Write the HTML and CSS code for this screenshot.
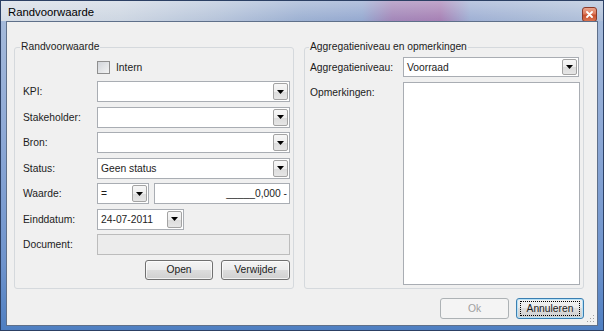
FILE: index.html
```html
<!DOCTYPE html>
<html>
<head>
<meta charset="utf-8">
<link rel="stylesheet" href="styles.css">
</head>
<body>
<div class="window">
  <div class="titlebar">
    <span class="title">Randvoorwaarde</span>
    <div class="close"><svg width="7" height="7" viewBox="0 0 7 7"><path d="M1 1L6 6M6 1L1 6" stroke="#fff" stroke-width="1.8" stroke-linecap="round"/></svg></div>
  </div>
  <div class="client">
    <div class="groups">
      <fieldset class="group group-left">
        <legend>Randvoorwaarde</legend>
        <div class="form form-left">
          <div class="check-row">
            <span class="checkbox"></span><span class="check-label">Intern</span>
          </div>

          <label class="lbl">KPI:</label>
          <div class="combo"><span class="val"></span><span class="drop"><svg width="7" height="4" viewBox="0 0 7 4"><polygon points="0,0 7,0 3.5,4" fill="#000"/></svg></span></div>

          <label class="lbl">Stakeholder:</label>
          <div class="combo"><span class="val"></span><span class="drop"><svg width="7" height="4" viewBox="0 0 7 4"><polygon points="0,0 7,0 3.5,4" fill="#000"/></svg></span></div>

          <label class="lbl">Bron:</label>
          <div class="combo"><span class="val"></span><span class="drop"><svg width="7" height="4" viewBox="0 0 7 4"><polygon points="0,0 7,0 3.5,4" fill="#000"/></svg></span></div>

          <label class="lbl">Status:</label>
          <div class="combo"><span class="val">Geen status</span><span class="drop"><svg width="7" height="4" viewBox="0 0 7 4"><polygon points="0,0 7,0 3.5,4" fill="#000"/></svg></span></div>

          <label class="lbl">Waarde:</label>
          <div class="pair">
            <div class="combo combo-op"><span class="val">=</span><span class="drop"><svg width="7" height="4" viewBox="0 0 7 4"><polygon points="0,0 7,0 3.5,4" fill="#000"/></svg></span></div>
            <div class="textbox num">_____0,000 -</div>
          </div>

          <label class="lbl">Einddatum:</label>
          <div class="combo combo-date"><span class="val">24-07-2011</span><span class="drop"><svg width="7" height="4" viewBox="0 0 7 4"><polygon points="0,0 7,0 3.5,4" fill="#000"/></svg></span></div>

          <label class="lbl">Document:</label>
          <div class="textbox disabled"></div>

          <div class="btn-row">
            <button class="btn btn-open">Open</button>
            <button class="btn btn-del">Verwijder</button>
          </div>
        </div>
      </fieldset>

      <fieldset class="group group-right">
        <legend>Aggregatieniveau en opmerkingen</legend>
        <div class="form form-right">
          <label class="lbl">Aggregatieniveau:</label>
          <div class="combo combo-agg"><span class="val">Voorraad</span><span class="drop"><svg width="7" height="4" viewBox="0 0 7 4"><polygon points="0,0 7,0 3.5,4" fill="#000"/></svg></span></div>

          <label class="lbl lbl-top">Opmerkingen:</label>
          <div class="textarea"></div>
        </div>
      </fieldset>
    </div>

    <div class="footer">
      <button class="btn btn-ok" disabled>Ok</button>
      <button class="btn btn-cancel"><span class="focus">Annuleren</span></button>
    </div>

    <svg class="grip" width="8" height="8" viewBox="0 0 8 8">
      <rect x="6" y="0" width="1" height="1" fill="#a0a0a0"/>
      <rect x="3" y="3" width="1" height="1" fill="#a0a0a0"/>
      <rect x="6" y="3" width="1" height="1" fill="#a0a0a0"/>
      <rect x="0" y="6" width="1" height="1" fill="#a0a0a0"/>
      <rect x="3" y="6" width="1" height="1" fill="#a0a0a0"/>
      <rect x="6" y="6" width="1" height="1" fill="#a0a0a0"/>
    </svg>
  </div>
</div>
</body>
</html>
```

FILE: styles.css
```css
html, body {
  margin: 0;
  padding: 0;
  background: #3d5273;
}

body {
  width: 604px;
  height: 331px;
  overflow: hidden;
  font-family: "Liberation Sans", Arial, sans-serif;
  font-size: 10.3px;
  color: #1c1c1c;
}

.window {
  box-sizing: border-box;
  width: 604px;
  height: 331px;
  border: 1px solid #2c4064;
  padding: 0 5px 4px 5px;
  display: flex;
  flex-direction: column;
  background: linear-gradient(to bottom, #a9bddb 0%, #8ea9d6 40%, #6e93cc 80%, #4f7fc2 100%);
}

.titlebar {
  height: 20px;
  margin: 0 -5px;
  padding: 0 6px 0 7px;
  display: flex;
  align-items: center;
  justify-content: space-between;
  background:
    linear-gradient(to bottom, rgba(255,255,255,0.3) 0%, rgba(255,255,255,0.0) 100%),
    linear-gradient(to right, #d6dde6 0%, #cdd6e2 20%, #b6c4da 36%, #9cb0d2 50%, #95a9d0 60%, #a286b8 65%, #a680b4 73%, #9fb0d4 78%, #a9bad6 90%, #b1c1da 100%);
}

.title {
  font-size: 11.3px;
  padding-top: 1px;
  color: #000;
}

.close {
  width: 15px;
  height: 15px;
  box-sizing: border-box;
  margin-top: 7px;
  border: 1px solid #8a3a2a;
  border-radius: 3px;
  background: linear-gradient(to bottom, #eba48c 0%, #dd7a5c 45%, #c9502f 55%, #d9734f 100%);
  display: flex;
  align-items: center;
  justify-content: center;
}

.client {
  position: relative;
  flex: 1;
  border: 1px solid #5f708a;
  background: #f0f0f0;
  padding: 19px 13px 0 7px;
  display: flex;
  flex-direction: column;
}

.groups {
  display: flex;
  gap: 10px;
}

.group {
  margin: 0;
  min-width: 0;
  box-sizing: border-box;
  width: 280px;
  height: 248px;
  border: 1px solid #d5d9dd;
  border-radius: 3px;
  padding: 0 3px 0 5px;
}

.group legend {
  padding: 0 1px;
  line-height: 12px;
  color: #1c1c1c;
}

.group-right {
  padding: 0 4px 0 4px;
}

.form {
  display: grid;
  align-items: center;
}

.form-left {
  grid-template-columns: 74px 193px;
  grid-auto-rows: 21px;
  row-gap: 4.5px;
  padding: 2.5px 0 0 3px;
}

.check-row {
  grid-column: 2;
  height: 20px;
  display: flex;
  align-items: center;
  gap: 6px;
  align-self: start;
  padding-top: 4px;
  box-sizing: border-box;
}

.checkbox {
  width: 13px;
  height: 13px;
  box-sizing: border-box;
  border: 1px solid #8f8f8f;
  background: linear-gradient(135deg, #d2d5da 0%, #f3f3f3 100%);
}

.lbl {
  color: #1c1c1c;
}

.combo {
  box-sizing: border-box;
  height: 21px;
  border: 1px solid #a9adb3;
  background: #fff;
  padding: 1px;
  display: flex;
  align-items: stretch;
}

.val {
  flex: 1;
  padding-left: 2px;
  display: flex;
  align-items: center;
  white-space: nowrap;
}

.drop {
  width: 15px;
  box-sizing: border-box;
  border: 1px solid #a3a3a3;
  border-radius: 2px;
  background: linear-gradient(to bottom, #f7f7f7 0%, #eeeeee 50%, #dcdcdc 51%, #e6e6e6 100%);
  display: flex;
  align-items: center;
  justify-content: center;
}

.pair {
  display: flex;
  gap: 5px;
  height: 21px;
}

.combo-op {
  width: 52px;
}

.combo-date {
  width: 87px;
}

.textbox {
  box-sizing: border-box;
  height: 21px;
  border: 1px solid #a9adb3;
  background: #fff;
}

.num {
  flex: 1;
  display: flex;
  align-items: center;
  justify-content: flex-end;
  padding-right: 2px;
}

.disabled {
  background: #ececec;
  border-color: #bcbcbc;
}

.btn-row {
  grid-column: 1 / 3;
  display: flex;
  justify-content: flex-end;
  gap: 8px;
  height: 20px;
  align-self: start;
}

.btn {
  box-sizing: border-box;
  height: 20px;
  border: 1px solid #707070;
  border-radius: 3px;
  font-family: inherit;
  font-size: 10.3px;
  color: #1c1c1c;
  padding: 0;
  background: linear-gradient(to bottom, #f4f4f4 0%, #ececec 48%, #dddddd 50%, #d0d0d0 100%);
  box-shadow: inset 0 0 0 1px rgba(255,255,255,0.7);
  display: flex;
  align-items: center;
  justify-content: center;
}

.btn-open {
  width: 68px;
}

.btn-del {
  width: 69px;
}

.form-right {
  grid-template-columns: 93px 176px;
  grid-template-rows: 20px 203px;
  row-gap: 5px;
  padding: 4px 0 0 1px;
}

.combo-agg {
  height: 20px;
}

.lbl-top {
  align-self: start;
  padding-top: 5px;
}

.textarea {
  box-sizing: border-box;
  height: 203px;
  width: 177px;
  border: 1px solid #a9adb3;
  background: #fff;
}

.footer {
  margin-top: 9px;
  display: flex;
  justify-content: flex-end;
  gap: 7px;
}

.footer .btn {
  height: 21px;
}

.btn-ok {
  width: 69px;
  border-color: #adb2b5;
  background: #f4f4f4;
  color: #a0a0a0;
  box-shadow: none;
}

.btn-cancel {
  width: 68px;
  border-color: #3c7fb1;
  box-shadow: inset 0 0 0 1px #b7e2f8;
  background: linear-gradient(to bottom, #f2f2f2 0%, #ebebeb 48%, #dddddd 50%, #cfcfcf 100%);
}

.focus {
  box-sizing: border-box;
  height: 15px;
  width: 60px;
  border: 1px dotted #000;
  display: flex;
  align-items: center;
  justify-content: center;
}

.grip {
  position: absolute;
  right: 2px;
  bottom: 2px;
}
```
